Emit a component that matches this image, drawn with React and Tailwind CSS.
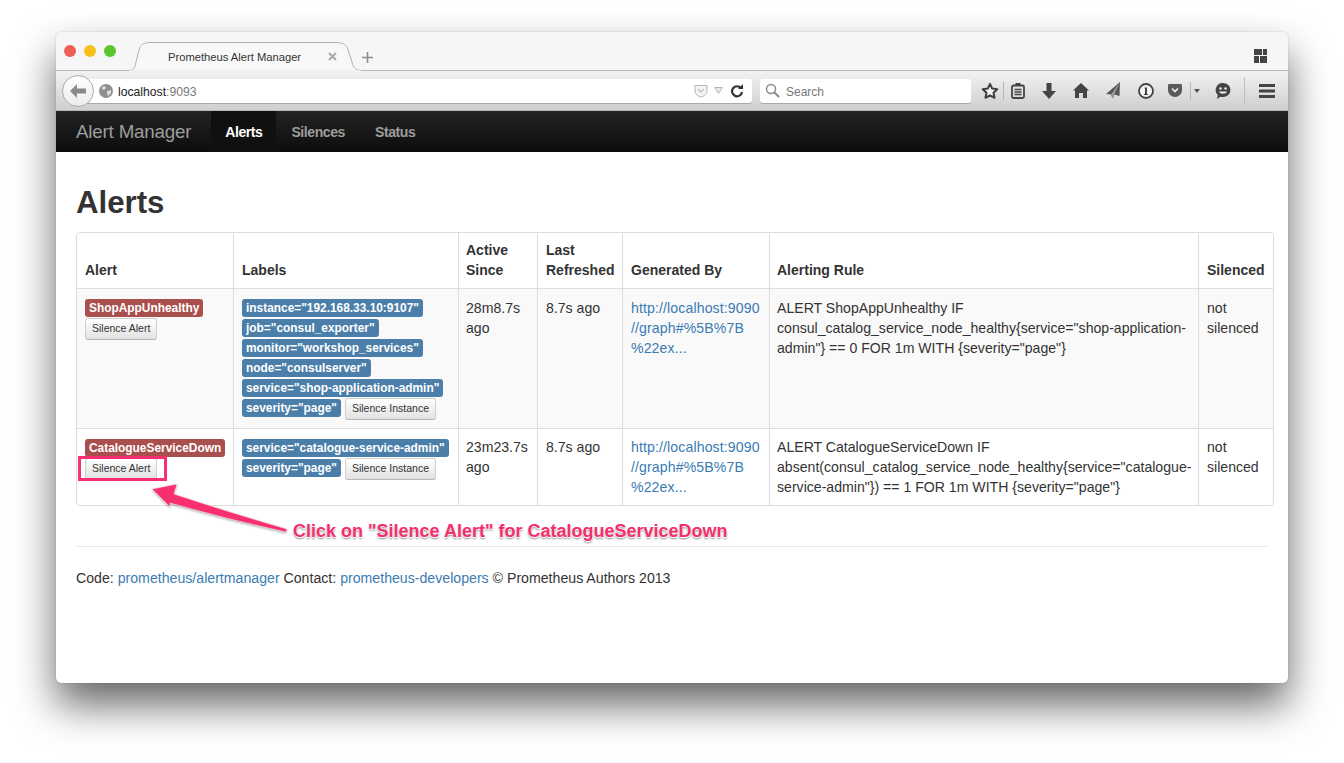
import React from "react";

const font = "font-['Liberation_Sans',Arial,sans-serif]";

function Label({ children, red }) {
  return (
    <span className={`inline-flex items-center h-[18px] px-[4px] pt-[2px] rounded-[3px] text-white font-bold text-[11.900px] leading-none whitespace-nowrap ${red ? "bg-[#a9504e]" : "bg-[#4b7ea9]"}`}>
      {children}
    </span>
  );
}

function Btn({ children }) {
  return (
    <button className="block h-[22px] px-[6px] pb-[2px] rounded-[3px] border border-[#cfcfcf] border-b-[#b5b5b5] bg-gradient-to-b from-white to-[#e2e2e2] text-[#333] text-[10.500px] leading-none whitespace-nowrap">
      {children}
    </button>
  );
}

function Slot({ w, children }) {
  return <div className="flex items-center justify-center shrink-0 h-full" style={{ width: w }}>{children}</div>;
}

function Toolbar() {
  return (
    <div className="h-[40px] bg-gradient-to-b from-[#f2f2f2] to-[#cfcfcf] border-b border-[#b8b8b8] flex items-center relative">
      <div className="ml-[24px] w-[672px] h-[24px] bg-white rounded-r-[3px] shadow-[0_1px_0_#a9a9a9] flex items-center pl-[19px] pr-[6px]">
        <svg width="14" height="14" viewBox="0 0 14 14" className="shrink-0">
          <circle cx="7" cy="7" r="7" fill="#8f8f8f" />
          <path d="M3 3l3-1 1 2-2 2-2-1zM8 7l4-1 0 3-3 3-1-2z" fill="#dcdcdc" />
        </svg>
        <span className="ml-[5px] pt-[3px] text-[12.200px] text-[#222]">localhost<span className="text-[#777]">:9093</span></span>
        <div className="ml-auto flex items-center gap-[6px]">
          <svg width="14" height="14" viewBox="0 0 14 14"><path d="M1 1.500h12v5.500c0 3-3 5.500-6 6-3-.5-6-3-6-6z" fill="#f4f4f4" stroke="#b5b5b5" /><path d="M4 5l3 3 3-3" fill="none" stroke="#c4c4c4" strokeWidth="1.500" /></svg>
          <svg width="9" height="7" viewBox="0 0 9 7"><path d="M.5.5h8L4.5 6.500z" fill="#e6e6e6" stroke="#b5b5b5" /></svg>
          <svg width="14" height="14" viewBox="0 0 14 14" className="ml-[3px] -translate-x-[2px]"><path d="M11 4.200A5 5 0 1 0 12 8" fill="none" stroke="#333" strokeWidth="2.200" /><path d="M8 5h5V0z" fill="#333" /></svg>
        </div>
      </div>
      <div className="ml-[8px] w-[211px] h-[24px] bg-white rounded-[3px] shadow-[0_1px_0_#a9a9a9] flex items-center pl-[5px]">
        <svg width="15" height="15" viewBox="0 0 15 15"><circle cx="6" cy="6" r="4.500" fill="none" stroke="#8a8a8a" strokeWidth="1.500" /><path d="M9.500 9.500l4.500 4.500" stroke="#8a8a8a" strokeWidth="2" /></svg>
        <span className="ml-[6px] pt-[2px] text-[12px] text-[#777]">Search</span>
      </div>
      <div className="flex items-center h-full ml-[5px]">
        <Slot w={28}><svg width="18" height="18" viewBox="0 0 18 18"><path d="M9 1.800l2.200 4.800 5.100.6-3.800 3.500 1 5.100L9 13.300l-4.500 2.500 1-5.100L1.700 7.200l5.100-.6z" fill="#f2f2f2" stroke="#3f3f3f" strokeWidth="2" strokeLinejoin="round" /></svg></Slot>
        <div className="w-px h-[18px] bg-[#b5b5b5] -ml-px" />
        <Slot w={28}><svg width="14" height="16" viewBox="0 0 14 16"><rect x="1" y="2.500" width="12" height="12.500" rx="1.500" fill="none" stroke="#444" strokeWidth="1.800" /><rect x="4.500" y="0" width="5" height="3" fill="#444" /><path d="M3.500 6.500h7M3.500 9h7M3.500 11.500h7" stroke="#444" strokeWidth="1.500" /></svg></Slot>
        <Slot w={34}><svg width="14" height="16" viewBox="0 0 14 16"><path d="M4.500 0h5v8H14l-7 8-7-8h4.500z" fill="#444" /></svg></Slot>
        <Slot w={30}><svg width="16" height="15" viewBox="0 0 16 15"><path d="M8 0l8 7.500h-2V15h-4v-5H6v5H2V7.500H0z" fill="#444" /></svg></Slot>
        <Slot w={36}><svg width="16" height="17" viewBox="0 0 16 17"><path d="M14 0L0 12l5 .5 1.500 4 2-4 5 1.500z" fill="#555" /><path d="M14 0L5 12.500l1.500 4z" fill="#999" /></svg></Slot>
        <Slot w={27}><svg width="16" height="16" viewBox="0 0 16 16"><circle cx="8" cy="8" r="7" fill="#f3f3f3" stroke="#444" strokeWidth="1.800" /><path d="M6.500 4.500H9v6.500h1v1H6v-1h1V5.500h-.5z" fill="#444" /></svg></Slot>
        <Slot w={31}><svg width="14" height="13" viewBox="0 0 14 13"><path d="M0 1.500C0 .5.500 0 1.500 0h11c1 0 1.500.5 1.500 1.500V6c0 4-3.500 7-7 7S0 10 0 6z" fill="#5a5a5a" /><path d="M4 4.500l3 3 3-3" fill="none" stroke="#eee" strokeWidth="1.700" /></svg></Slot>
        <div className="w-px h-[18px] bg-[#b5b5b5]" />
        <Slot w={12}><svg width="6" height="4" viewBox="0 0 6 4"><path d="M0 0h6L3 4z" fill="#555" /></svg></Slot>
        <Slot w={40}><svg width="16" height="16" viewBox="0 0 16 16"><path d="M8 0a7.500 7 0 0 1 0 14c-1 0-1.500 0-2.500-.3L2 16l.8-4A7 7 0 0 1 8 0z" fill="#444" /><circle cx="5.500" cy="5.500" r="1.200" fill="#eee" /><circle cx="10.500" cy="5.500" r="1.200" fill="#eee" /><path d="M4 8.500c1 3 7 3 8 0z" fill="#eee" /></svg></Slot>
        <div className="w-px h-[28px] bg-[#bdbdbd] ml-[1px]" />
        <Slot w={43}><svg width="16" height="14" viewBox="0 0 16 14"><path d="M0 0h16v3H0zM0 5.500h16v3H0zM0 11h16v3H0z" fill="#444" /></svg></Slot>
      </div>
    </div>
  );
}

function TabBar() {
  return (
    <div className="h-[39px] bg-[#f6f6f6] border-b border-[#b9b9b9] flex items-start relative">
      <div className="flex gap-[8px] ml-[8px] mt-[13px]">
        <span className="size-[12px] rounded-full bg-[#ee6055]" />
        <span className="size-[12px] rounded-full bg-[#f6bf1c]" />
        <span className="size-[12px] rounded-full bg-[#5cc52d]" />
      </div>
      <div className="relative ml-[12px] mt-[10px] w-[234px] h-[29px] flex items-center">
        <svg width="234" height="29" viewBox="0 0 234 29" className="absolute inset-0">
          <path d="M0 28.500C6 28.500 7 26 8 20L11 8C12 3 16 .5 22 .5H208C215 .5 219 3 220 8L224 20C225 26 228 28.500 234 28.500" fill="#f8f8f8" stroke="#b0b0b0" />
          <path d="M1 29h232" stroke="#f8f8f8" strokeWidth="1.500" />
        </svg>
        <span className="relative ml-[40px] pt-[2px] text-[11.200px] text-[#333] whitespace-nowrap">Prometheus Alert Manager</span>
        <svg width="9" height="9" viewBox="0 0 9 9" className="relative ml-[27px]"><path d="M1 1l7 7M8 1L1 8" stroke="#a8a8a8" strokeWidth="2" /></svg>
      </div>
      <svg width="11" height="11" viewBox="0 0 11 11" className="mt-[20px]"><path d="M5.500 0v11M0 5.500h11" stroke="#8d8d8d" strokeWidth="1.600" /></svg>
      <svg width="13" height="14" viewBox="0 0 13 14" className="ml-auto mr-[21px] mt-[17px]"><path d="M0 0h8v6H0zM9 0h4v6H9zM0 7h5v7H0zM6 7h7v7H6z" fill="#444" /></svg>
    </div>
  );
}

function Navbar() {
  return (
    <div className="h-[41px] bg-gradient-to-b from-[#232323] to-[#0d0d0d] flex items-stretch">
      <span className="ml-[20px] pt-[2px] self-center text-[18.800px] text-[#9d9d9d] tracking-[-0.2px] whitespace-nowrap">Alert Manager</span>
      <span className="ml-[20px] w-[65px] pt-[2px] bg-[#101010] flex items-center justify-center text-white font-bold text-[14px] tracking-[-0.4px]">Alerts</span>
      <span className="ml-[15px] pt-[2px] flex items-center text-[#9d9d9d] font-bold text-[14px] tracking-[-0.4px]">Silences</span>
      <span className="ml-[30px] pt-[2px] flex items-center text-[#9d9d9d] font-bold text-[14px] tracking-[-0.4px]">Status</span>
    </div>
  );
}

const Link = ({ children, wide }) => <a className={`text-[#3a7cb3] ${wide ? "tracking-[0.12px]" : ""}`}>{children}</a>;

const th = "border-l border-[#ddd] first:border-l-0 border-b border-b-[#ddd] p-[8px] pt-[7px] text-left align-bottom font-bold leading-[20px]";
const td = "border-l border-[#ddd] first:border-l-0 p-[8px] align-top leading-[20px] text-[14.100px]";
const r1 = `${td} border-b border-b-[#ddd]`;
const r1t = `${r1} pt-[9px] pb-[7px]`;

function Alerts() {
  return (
    <div className="w-[1198px] border border-[#ddd] rounded-[4px] overflow-hidden">
      <table className="table-fixed w-[1196px] border-separate border-spacing-0 text-[14px] text-[#333]">
        <colgroup>
          <col className="w-[156px]" /><col className="w-[225px]" /><col className="w-[79px]" /><col className="w-[85px]" /><col className="w-[147px]" /><col className="w-[429px]" /><col className="w-[75px]" />
        </colgroup>
        <thead>
          <tr>
            <th className={th}>Alert</th>
            <th className={th}>Labels</th>
            <th className={`${th} pl-[7px]`}>Active Since</th>
            <th className={th}>Last Refreshed</th>
            <th className={th}>Generated By</th>
            <th className={`${th} pl-[7px]`}>Alerting Rule</th>
            <th className={th}>Silenced</th>
          </tr>
        </thead>
        <tbody>
          <tr className="bg-[#f9f9f9]">
            <td className={r1}>
              <div className="flex flex-col items-start pt-[2px]">
                <Label red>ShopAppUnhealthy</Label>
                <div className="mt-px"><Btn>Silence Alert</Btn></div>
              </div>
            </td>
            <td className={r1}>
              <div className="flex flex-col items-start gap-[2px] pt-[2px]">
                <Label>instance="192.168.33.10:9107"</Label>
                <Label>job="consul_exporter"</Label>
                <Label>monitor="workshop_services"</Label>
                <Label>node="consulserver"</Label>
                <Label>service="shop-application-admin"</Label>
                <div className="flex items-start gap-[4px] h-[21px]"><Label>severity="page"</Label><div className="-mt-px"><Btn>Silence Instance</Btn></div></div>
              </div>
            </td>
            <td className={`${r1t} pl-[7px]`}>28m8.7s ago</td>
            <td className={r1t}>8.7s ago</td>
            <td className={r1t}><Link wide>http://localhost:9090<br />//graph#%5B%7B<br />%22ex...</Link></td>
            <td className={`${r1t} pl-[7px]`}>ALERT ShopAppUnhealthy IF<br />consul_catalog_service_node_healthy{"{"}service="shop-application-<br />admin"{"}"} == 0 FOR 1m WITH {"{"}severity="page"{"}"}</td>
            <td className={r1t}>not silenced</td>
          </tr>
          <tr>
            <td className={td}>
              <div className="flex flex-col items-start pt-[2px]">
                <Label red>CatalogueServiceDown</Label>
                <div className="mt-px"><Btn>Silence Alert</Btn></div>
              </div>
            </td>
            <td className={td}>
              <div className="flex flex-col items-start gap-[2px] pt-[2px]">
                <Label>service="catalogue-service-admin"</Label>
                <div className="flex items-start gap-[4px] h-[21px]"><Label>severity="page"</Label><div className="-mt-px"><Btn>Silence Instance</Btn></div></div>
              </div>
            </td>
            <td className={`${td} pl-[7px]`}>23m23.7s ago</td>
            <td className={td}>8.7s ago</td>
            <td className={td}><Link wide>http://localhost:9090<br />//graph#%5B%7B<br />%22ex...</Link></td>
            <td className={`${td} pl-[7px]`}>ALERT CatalogueServiceDown IF<br />absent(consul_catalog_service_node_healthy{"{"}service="catalogue-<br />service-admin"{"}"}) == 1 FOR 1m WITH {"{"}severity="page"{"}"}</td>
            <td className={td}>not silenced</td>
          </tr>
        </tbody>
      </table>
    </div>
  );
}

export default function App() {
  return (
    <div className={`relative w-[1344px] h-[763px] overflow-hidden bg-white pt-[32px] pl-[56px] ${font}`}>
      <div className="w-[1232px] h-[651px] bg-white rounded-[5px] overflow-hidden shadow-[0_22px_42px_rgba(0,0,0,0.6),0_0_1px_rgba(0,0,0,0.5)]">
        <TabBar />
        <Toolbar />
        <Navbar />
        <div className="px-[20px] text-[14.150px] text-[#333]">
          <h1 className="pt-[33px] text-[31.200px] leading-[36px] font-bold text-[#333]">Alerts</h1>
          <div className="mt-[11px]"><Alerts /></div>
          <hr className="mt-[40px] border-[#e7e7e7]" />
          <p className="mt-[21px] leading-[20px]">Code: <Link>prometheus/alertmanager</Link> Contact: <Link>prometheus-developers</Link> © Prometheus Authors 2013</p>
        </div>
      </div>

      <div className="absolute left-[62px] top-[75px] size-[32px] rounded-full bg-gradient-to-b from-white to-[#ececec] border border-[#adadad] flex items-center justify-center">
        <svg width="16" height="14" viewBox="0 0 16 14"><path d="M7 0L0 7l7 7V9.500h9v-5H7z" fill="#8a8a8a" /></svg>
      </div>

      <div className="absolute left-[78px] top-[456px] w-[89px] h-[25px] border-[3px] border-[#f9306f]" />
      <svg width="150" height="60" viewBox="0 0 150 60" className="absolute left-[145px] top-[482px] drop-shadow-[0_1px_1px_rgba(0,0,0,0.35)]">
        <path d="M7 7L32 2 29 12Q90 32 142 47L141 50Q85 38 25 21L25 25z" fill="#f9306f" stroke="#fff" strokeWidth="0.500" />
      </svg>
      <span className="absolute left-[293px] top-[520px] text-[18px] leading-[22px] font-bold text-[#f42e6c] whitespace-nowrap [text-shadow:0_0_1px_#fff,0_1px_0_#fff,0_2px_2px_rgba(0,0,0,0.45)]">Click on "Silence Alert" for CatalogueServiceDown</span>
    </div>
  );
}
